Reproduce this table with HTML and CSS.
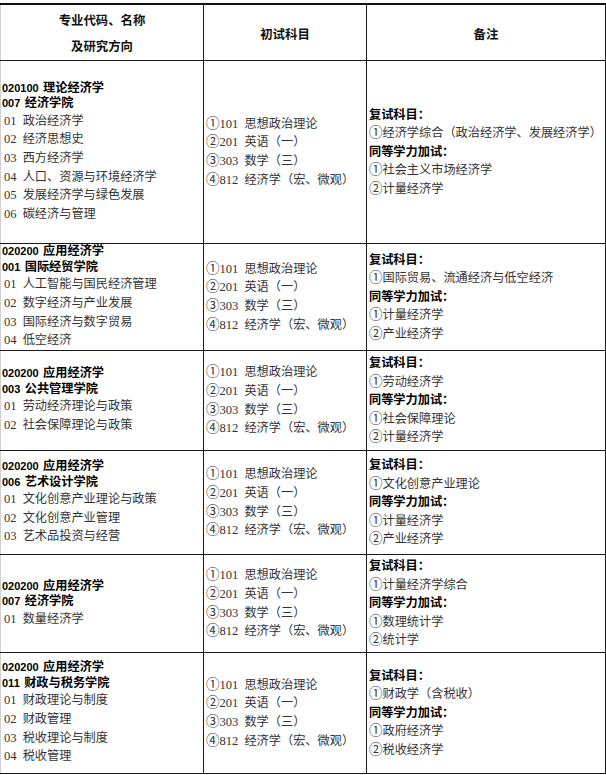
FILE: index.html
```html
<!DOCTYPE html>
<html lang="zh-CN">
<head>
<meta charset="utf-8">
<title>专业目录</title>
<link rel="stylesheet" href="styles.css">
</head>
<body>
<table class="grid">
  <colgroup><col class="c0"><col class="c1"><col class="c2"></colgroup>
  <thead>
    <tr class="head">
      <th class="h0"><div class="hl">专业代码、名称</div><div class="hl">及研究方向</div></th>
      <th>初试科目</th>
      <th>备注</th>
    </tr>
  </thead>
  <tbody>
    <tr class="r1">
      <td class="major">
        <div class="code"><span class="cn">020100</span> 理论经济学</div>
        <div class="code"><span class="cn">007</span> 经济学院</div>
        <div class="item"><span class="n">01</span> 政治经济学</div>
        <div class="item"><span class="n">02</span> 经济思想史</div>
        <div class="item"><span class="n">03</span> 西方经济学</div>
        <div class="item"><span class="n">04</span> 人口、资源与环境经济学</div>
        <div class="item"><span class="n">05</span> 发展经济学与绿色发展</div>
        <div class="item"><span class="n">06</span> 碳经济与管理</div>
      </td>
      <td class="exam">
        <div class="item"><span class="n"><span class="ci">①</span>101</span> 思想政治理论</div>
        <div class="item"><span class="n"><span class="ci">②</span>201</span> 英语（一）</div>
        <div class="item"><span class="n"><span class="ci">③</span>303</span> 数学（三）</div>
        <div class="item"><span class="n"><span class="ci">④</span>812</span> 经济学（宏、微观）</div>
      </td>
      <td class="note">
        <div class="lbl">复试科目：</div>
        <div class="line"><span class="ci">①</span>经济学综合（政治经济学、发展经济学）</div>
        <div class="lbl">同等学力加试：</div>
        <div class="line"><span class="ci">①</span>社会主义市场经济学</div>
        <div class="line"><span class="ci">②</span>计量经济学</div>
      </td>
    </tr>
    <tr class="r2">
      <td class="major">
        <div class="code"><span class="cn">020200</span> 应用经济学</div>
        <div class="code"><span class="cn">001</span> 国际经贸学院</div>
        <div class="item"><span class="n">01</span> 人工智能与国民经济管理</div>
        <div class="item"><span class="n">02</span> 数字经济与产业发展</div>
        <div class="item"><span class="n">03</span> 国际经济与数字贸易</div>
        <div class="item"><span class="n">04</span> 低空经济</div>
      </td>
      <td class="exam">
        <div class="item"><span class="n"><span class="ci">①</span>101</span> 思想政治理论</div>
        <div class="item"><span class="n"><span class="ci">②</span>201</span> 英语（一）</div>
        <div class="item"><span class="n"><span class="ci">③</span>303</span> 数学（三）</div>
        <div class="item"><span class="n"><span class="ci">④</span>812</span> 经济学（宏、微观）</div>
      </td>
      <td class="note">
        <div class="lbl">复试科目：</div>
        <div class="line"><span class="ci">①</span>国际贸易、流通经济与低空经济</div>
        <div class="lbl">同等学力加试：</div>
        <div class="line"><span class="ci">①</span>计量经济学</div>
        <div class="line"><span class="ci">②</span>产业经济学</div>
      </td>
    </tr>
    <tr class="r3">
      <td class="major">
        <div class="code"><span class="cn">020200</span> 应用经济学</div>
        <div class="code"><span class="cn">003</span> 公共管理学院</div>
        <div class="item"><span class="n">01</span> 劳动经济理论与政策</div>
        <div class="item"><span class="n">02</span> 社会保障理论与政策</div>
      </td>
      <td class="exam">
        <div class="item"><span class="n"><span class="ci">①</span>101</span> 思想政治理论</div>
        <div class="item"><span class="n"><span class="ci">②</span>201</span> 英语（一）</div>
        <div class="item"><span class="n"><span class="ci">③</span>303</span> 数学（三）</div>
        <div class="item"><span class="n"><span class="ci">④</span>812</span> 经济学（宏、微观）</div>
      </td>
      <td class="note">
        <div class="lbl">复试科目：</div>
        <div class="line"><span class="ci">①</span>劳动经济学</div>
        <div class="lbl">同等学力加试：</div>
        <div class="line"><span class="ci">①</span>社会保障理论</div>
        <div class="line"><span class="ci">②</span>计量经济学</div>
      </td>
    </tr>
    <tr class="r4">
      <td class="major">
        <div class="code"><span class="cn">020200</span> 应用经济学</div>
        <div class="code"><span class="cn">006</span> 艺术设计学院</div>
        <div class="item"><span class="n">01</span> 文化创意产业理论与政策</div>
        <div class="item"><span class="n">02</span> 文化创意产业管理</div>
        <div class="item"><span class="n">03</span> 艺术品投资与经营</div>
      </td>
      <td class="exam">
        <div class="item"><span class="n"><span class="ci">①</span>101</span> 思想政治理论</div>
        <div class="item"><span class="n"><span class="ci">②</span>201</span> 英语（一）</div>
        <div class="item"><span class="n"><span class="ci">③</span>303</span> 数学（三）</div>
        <div class="item"><span class="n"><span class="ci">④</span>812</span> 经济学（宏、微观）</div>
      </td>
      <td class="note">
        <div class="lbl">复试科目：</div>
        <div class="line"><span class="ci">①</span>文化创意产业理论</div>
        <div class="lbl">同等学力加试：</div>
        <div class="line"><span class="ci">①</span>计量经济学</div>
        <div class="line"><span class="ci">②</span>产业经济学</div>
      </td>
    </tr>
    <tr class="r5">
      <td class="major">
        <div class="code"><span class="cn">020200</span> 应用经济学</div>
        <div class="code"><span class="cn">007</span> 经济学院</div>
        <div class="item"><span class="n">01</span> 数量经济学</div>
      </td>
      <td class="exam">
        <div class="item"><span class="n"><span class="ci">①</span>101</span> 思想政治理论</div>
        <div class="item"><span class="n"><span class="ci">②</span>201</span> 英语（一）</div>
        <div class="item"><span class="n"><span class="ci">③</span>303</span> 数学（三）</div>
        <div class="item"><span class="n"><span class="ci">④</span>812</span> 经济学（宏、微观）</div>
      </td>
      <td class="note">
        <div class="lbl">复试科目：</div>
        <div class="line"><span class="ci">①</span>计量经济学综合</div>
        <div class="lbl">同等学力加试：</div>
        <div class="line"><span class="ci">①</span>数理统计学</div>
        <div class="line"><span class="ci">②</span>统计学</div>
      </td>
    </tr>
    <tr class="r6">
      <td class="major">
        <div class="code"><span class="cn">020200</span> 应用经济学</div>
        <div class="code"><span class="cn">011</span> 财政与税务学院</div>
        <div class="item"><span class="n">01</span> 财政理论与制度</div>
        <div class="item"><span class="n">02</span> 财政管理</div>
        <div class="item"><span class="n">03</span> 税收理论与制度</div>
        <div class="item"><span class="n">04</span> 税收管理</div>
      </td>
      <td class="exam">
        <div class="item"><span class="n"><span class="ci">①</span>101</span> 思想政治理论</div>
        <div class="item"><span class="n"><span class="ci">②</span>201</span> 英语（一）</div>
        <div class="item"><span class="n"><span class="ci">③</span>303</span> 数学（三）</div>
        <div class="item"><span class="n"><span class="ci">④</span>812</span> 经济学（宏、微观）</div>
      </td>
      <td class="note">
        <div class="lbl">复试科目：</div>
        <div class="line"><span class="ci">①</span>财政学（含税收）</div>
        <div class="lbl">同等学力加试：</div>
        <div class="line"><span class="ci">①</span>政府经济学</div>
        <div class="line"><span class="ci">②</span>税收经济学</div>
      </td>
    </tr>
  </tbody>
</table>
</body>
</html>
```

FILE: styles.css
```css
html, body {
  margin: 0;
  padding: 0;
  background: #fff;
}

body {
  font-family: "Liberation Serif", "Noto Sans CJK SC", serif;
  font-size: 12.2px;
  color: #333;
}

.grid {
  border-collapse: collapse;
  table-layout: fixed;
  width: 605px;
  margin-top: 3px;
}

.c0 { width: 203px; }
.c1 { width: 163px; }
.c2 { width: 239px; }

.grid th,
.grid td {
  border: 1px solid #1a1a1a;
  vertical-align: middle;
  padding: 0;
}

.grid tr > :first-child {
  border-left: 1px solid #d0d0d0;
}

.grid thead th {
  border-top: 2px solid #111;
  font-family: "Liberation Sans", "Noto Sans CJK SC", sans-serif;
  font-weight: 700;
  font-size: 12.4px;
  color: #111;
  text-align: center;
  height: 52px;
  padding-top: 3px;
}

.hl {
  line-height: 26px;
}

.r1 td { height: 182px; }
.r2 td { height: 106px; }
.r3 td { height: 99px; }
.r4 td { height: 103px; }
.r5 td { height: 97px; }
.r6 td { height: 120px; }

.major {
  padding-left: 1px !important;
}

.code {
  font-family: "Liberation Sans", "Noto Sans CJK SC", sans-serif;
  font-weight: 700;
  color: #000;
  line-height: 15.5px;
}

.cn {
  font-size: 11px;
  margin-right: 1px;
}

.item {
  line-height: 18.6px;
  white-space: nowrap;
}

.major .item {
  padding-left: 2px;
}

.n {
  margin-right: 3px;
  font-size: 12.6px;
}

.ci {
  font-family: "DejaVu Serif", "Noto Sans CJK SC", serif;
  font-size: 13.5px;
  line-height: 1;
}

.exam {
  padding-left: 2px !important;
}

.note {
  padding-left: 2px !important;
}

.lbl {
  font-family: "Liberation Sans", "Noto Sans CJK SC", sans-serif;
  font-weight: 700;
  color: #000;
  line-height: 18.6px;
}

.line {
  line-height: 18.6px;
  white-space: nowrap;
}
```
